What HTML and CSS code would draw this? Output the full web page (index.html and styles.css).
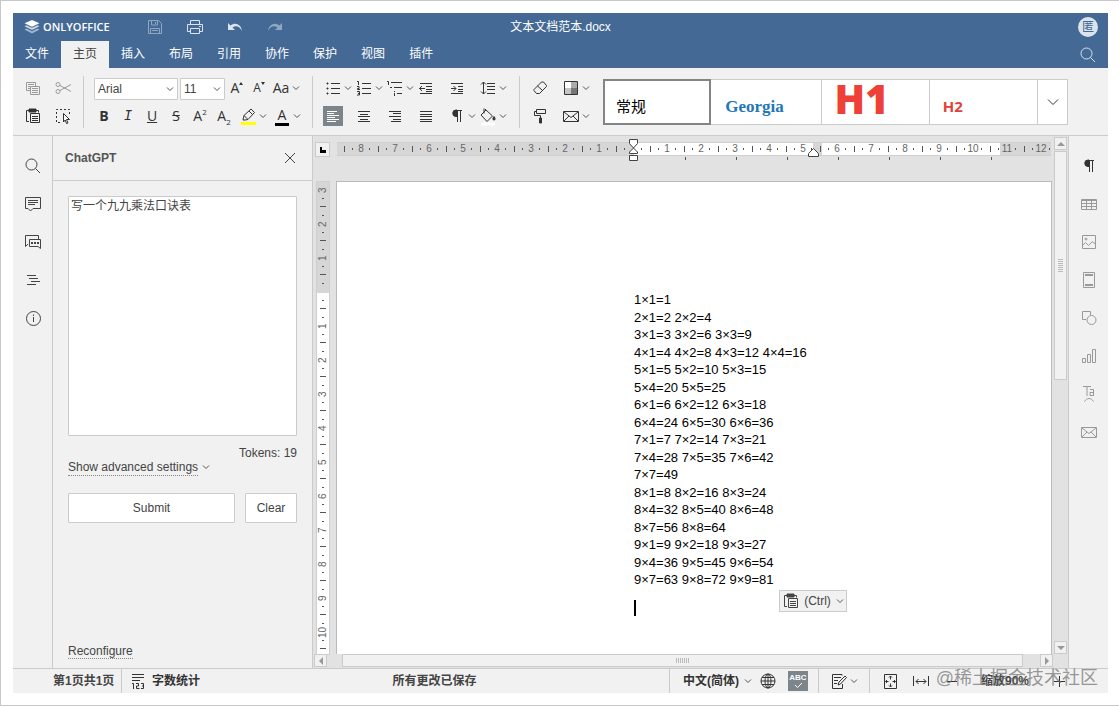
FILE: index.html
```
<!DOCTYPE html>
<html lang="zh-CN">
<head>
  <meta charset="UTF-8">
  <meta name="viewport" content="width=device-width, initial-scale=1.0">
  <title>文本文档范本.docx</title>
  <link rel="stylesheet" href="styles.css">
</head>
<body>
  <!-- Shared symbols -->
  <svg class="symbols" aria-hidden="true">
    <symbol id="caret" viewBox="0 0 10 20"><path d="M2 8.500 5 11.500l3-3"/></symbol>
    <symbol id="paste" viewBox="0 0 20 20"><path d="M6 15.500H3.500v-11H6M13 4.500h2.500v2"/><path class="solid" d="M6 3h7v3H6z"/><path d="M7.500 7.500h9v9h-9zM9 10.500h6M9 12.500h6M9 14.500h6"/></symbol>
    <symbol id="mail" viewBox="0 0 20 20"><path d="M2.500 5.500h15v10h-15zM3 6l7 5.500L17 6M3 15l5-5M17 15l-5-5"/></symbol>
    <symbol id="pilcrow" viewBox="0 0 20 20"><path class="solid" d="M10 4v6.500H9A3.200 3.200 0 0 1 9 4z"/><path d="M9 4.500h6M10.500 4v12M13.500 4v12"/></symbol>
    <symbol id="search" viewBox="0 0 20 20"><circle cx="8.500" cy="8.500" r="5.500"/><path d="m12.500 12.500 4.500 4.500"/></symbol>
  </svg>

  <div class="app">
    <header class="header">
      <div class="header-top">
        <div class="logo">
          <svg width="16" height="16" viewBox="0 0 16 16"><path fill="#fff" d="M8 1l7.500 3.300L8 7.700.5 4.300z"/><path fill="#c9d5e3" d="M2.500 6.200.5 7.300 8 10.900l7.500-3.600-2-1.100L8 8.800z"/><path fill="#a3b6cc" d="M2.500 9.500.5 10.600 8 14.500l7.500-3.900-2-1.100L8 12.200z"/></svg>
          <span>ONLYOFFICE</span>
        </div>
        <button class="head-btn dim" aria-label="保存"><svg class="icon" viewBox="0 0 20 20"><path d="M3.500 3.500h10l3 3v10h-13zM6.500 4v4h6V4M5.500 16.500v-5h9v5M7 13.500h6M10.500 5v2"/></svg></button>
        <button class="head-btn" aria-label="打印"><svg class="icon" viewBox="0 0 20 20"><path d="M5.500 7V3.500h9V7M5 14.500H2.500v-7h15v7H15M5.500 11.500h9v5h-9zM14 9.500h2"/></svg></button>
        <button class="head-btn" aria-label="撤销"><svg class="icon" viewBox="0 0 20 20"><path class="solid" stroke="none" d="M3 6v7h7L7.500 10.500C11 8 15 9.500 17 14c-.5-6-6.500-9.500-11.500-5.500z"/></svg></button>
        <button class="head-btn dim" aria-label="重做"><svg class="icon" viewBox="0 0 20 20"><path class="solid" stroke="none" d="M17 6v7h-7l2.500-2.500C9 8 5 9.500 3 14c.5-6 6.500-9.500 11.500-5.500z"/></svg></button>
        <h1 class="doc-title">文本文档范本.docx</h1>
        <span class="avatar">匿</span>
      </div>
      <nav class="tabs">
        <button class="tab">文件</button>
        <button class="tab active">主页</button>
        <button class="tab">插入</button>
        <button class="tab">布局</button>
        <button class="tab">引用</button>
        <button class="tab">协作</button>
        <button class="tab">保护</button>
        <button class="tab">视图</button>
        <button class="tab">插件</button>
        <button class="head-search" aria-label="搜索"><svg class="icon"><use href="#search"/></svg></button>
      </nav>
    </header>

    <!-- Home toolbar -->
    <div class="toolbar">
      <div class="group clip">
        <button class="btn off" aria-label="复制"><svg class="icon" viewBox="0 0 20 20"><path d="M7 12.500H3.500v-8h9V8M5 6.500h6M5 8.500h2M5 10.500h2M7.500 8.500h9v8h-9zM9 10.500h6M9 12.500h6M9 14.500h6"/></svg></button>
        <button class="btn off" aria-label="剪切"><svg class="icon" viewBox="0 0 20 20"><circle cx="5" cy="6.500" r="2"/><circle cx="5" cy="13.500" r="2"/><path d="m7 7.500 11 6M7 12.500l11-6"/></svg></button>
        <button class="btn" aria-label="粘贴"><svg class="icon"><use href="#paste"/></svg></button>
        <button class="btn" aria-label="全选"><svg class="icon" viewBox="0 0 20 20"><path stroke-dasharray="2 2" d="M16.500 8V3.500h-13v13H9"/><path fill="#fff" d="m10.500 7.500 6 6h-3l1.500 3.500-1.500.5-1.300-3.500-1.700 2z"/></svg></button>
      </div>
      <i class="sep"></i>

      <div class="group">
        <div class="row">
          <label class="combo font-name"><select aria-label="字体"><option>Arial</option></select><svg class="caret"><use href="#caret"/></svg></label>
          <label class="combo font-size"><select aria-label="字号"><option>11</option></select><svg class="caret"><use href="#caret"/></svg></label>
          <button class="btn glyph" aria-label="增大字号">A<svg class="mark" viewBox="0 0 4 4"><path d="M0 3h4L2 0z"/></svg></button>
          <button class="btn glyph small" aria-label="减小字号">A<svg class="mark" viewBox="0 0 4 4"><path d="M0 0h4L2 3z"/></svg></button>
          <button class="btn glyph wide" aria-label="更改大小写"><span>Aa</span><svg class="caret"><use href="#caret"/></svg></button>
        </div>
        <div class="row format">
          <button class="btn glyph"><b>B</b></button>
          <button class="btn glyph mono"><em>I</em></button>
          <button class="btn glyph"><u>U</u></button>
          <button class="btn glyph"><s>S</s></button>
          <button class="btn glyph"><span>A<sup>2</sup></span></button>
          <button class="btn glyph"><span>A<sub>2</sub></span></button>
          <button class="btn wide" aria-label="突出显示颜色"><svg class="icon" viewBox="0 0 20 20"><path stroke="#ff0" stroke-width="3" d="M3 17.500h15"/><path d="m5 14 1-4.500 7-6.500 3.500 3.500-6.500 7-3 .5zM6 9.500l3.500 3.500M11 5l3.500 3.500"/></svg><svg class="caret"><use href="#caret"/></svg></button>
          <button class="btn glyph wide" aria-label="字体颜色"><span class="font-color">A</span><svg class="caret"><use href="#caret"/></svg></button>
        </div>
      </div>
      <i class="sep"></i>

      <div class="group paragraph">
        <button class="btn wide" aria-label="项目符号"><svg class="icon" viewBox="0 0 20 20"><path d="M8 5.500h9M8 10.500h9M8 15.500h9"/><path class="solid" d="M4 5h1v1H4zM4 10h1v1H4zM4 15h1v1H4z"/></svg><svg class="caret"><use href="#caret"/></svg></button>
        <button class="btn wide" aria-label="编号"><svg class="icon" viewBox="0 0 20 20"><path d="M8 5.500h9M8 10.500h9M8 15.500h9M3 3.500h1.500V7M3 8.500h2v2H3.500v1H6M3 13.500h2.500v3.500H3M4 15.500h1"/></svg><svg class="caret"><use href="#caret"/></svg></button>
        <button class="btn wide" aria-label="多级列表"><svg class="icon" viewBox="0 0 20 20"><path d="M6 4.500h11M9 9.500h8M12 15.500h5M2 3.500h1.500V7M5 9.500h2M9.500 13v1M9.500 15v3"/></svg><svg class="caret"><use href="#caret"/></svg></button>
        <button class="btn" aria-label="减少缩进"><svg class="icon" viewBox="0 0 20 20"><path d="M4 5.500h12M10 8.500h6M10 11.500h6M4 15.500h12M10 13.500h6M3.500 10.500H9M6 8l-2.500 2.500L6 13"/></svg></button>
        <button class="btn" aria-label="增加缩进"><svg class="icon" viewBox="0 0 20 20"><path d="M4 5.500h12M11 8.500h5M11 11.500h5M4 15.500h12M11 13.500h5M4 10.500h5M6.500 8 9 10.500 6.500 13"/></svg></button>
        <button class="btn wide" aria-label="行距"><svg class="icon" viewBox="0 0 20 20"><path d="M9 5.500h8M9 8.500h8M9 11.500h8M9 15.500h8M5.500 4v12M3 6.500 5.500 4 8 6.500M3 13.500 5.500 16 8 13.500"/></svg><svg class="caret"><use href="#caret"/></svg></button>
        <button class="btn pressed" aria-label="左对齐"><svg class="icon" viewBox="0 0 20 20"><path d="M4 5.500h10M4 7.500h7M4 9.500h12M4 11.500h8M4 13.500h12M4 15.500h9"/></svg></button>
        <button class="btn" aria-label="居中"><svg class="icon" viewBox="0 0 20 20"><path d="M4 5.500h12M6 8.500h8M4 10.500h12M6 13.500h8M4 15.500h12"/></svg></button>
        <button class="btn" aria-label="右对齐"><svg class="icon" viewBox="0 0 20 20"><path d="M4 5.500h12M8 7.500h8M4 10.500h12M8 13.500h8M6 15.500h10"/></svg></button>
        <button class="btn" aria-label="两端对齐"><svg class="icon" viewBox="0 0 20 20"><path d="M4 5.500h12M4 8.500h12M4 10.500h12M4 13.500h12M4 15.500h12"/></svg></button>
        <button class="btn wide" aria-label="非打印字符"><svg class="icon"><use href="#pilcrow"/></svg><svg class="caret"><use href="#caret"/></svg></button>
        <button class="btn wide" aria-label="底纹"><svg class="icon" viewBox="0 0 20 20"><path d="m3 9 5-5 6.500 6L9 15.500zM6 2.500v5M7 3l2 2"/><path class="solid" d="M16 10.500c1.500 2 1.500 3.500 0 3.500s-1.500-1.500 0-3.500z"/><path stroke="#fff" stroke-width="3" d="M3 18h14"/></svg><svg class="caret"><use href="#caret"/></svg></button>
      </div>
      <i class="sep"></i>

      <div class="group extra">
        <button class="btn" aria-label="清除样式"><svg class="icon" viewBox="0 0 20 20"><path d="m4 11.500 7.500-7.500h2l3 3.500v1L9.500 15.500H6.500l-2.500-3zM7.500 8l5 4.500"/></svg></button>
        <button class="btn wide" aria-label="更改颜色方案"><svg class="icon" viewBox="0 0 20 20"><path fill="#fff" stroke="none" d="M4 4h6v6H4z"/><path fill="#c4c4c4" stroke="none" d="M4 10h6v6H4z"/><path fill="#aaa" stroke="none" d="M10 4h6v6h-6z"/><path fill="#777" stroke="none" d="M10 10h6v6h-6z"/><path d="M3.500 3.500h13v13h-13z"/></svg><svg class="caret"><use href="#caret"/></svg></button>
        <button class="btn" aria-label="复制样式"><svg class="icon" viewBox="0 0 20 20"><path d="M6.500 3.500h9v4h-9zM6 5.500H4.500v4h6V12"/><path class="solid" d="M9.500 12h2v5h-2z"/></svg></button>
        <button class="btn wide" aria-label="邮件合并"><svg class="icon"><use href="#mail"/></svg><svg class="caret"><use href="#caret"/></svg></button>
      </div>

      <div class="gallery">
        <button class="style current">常规</button>
        <button class="style georgia">Georgia</button>
        <button class="style big">H1</button>
        <button class="style h2">H2</button>
        <button class="style more" aria-label="更多样式"><svg class="icon" viewBox="0 0 20 20"><path d="m5 7.500 5 5 5-5"/></svg></button>
      </div>
    </div>

    <main class="main">
      <aside class="side left">
        <button aria-label="查找"><svg class="icon"><use href="#search"/></svg></button>
        <button aria-label="批注"><svg class="icon" viewBox="0 0 20 20"><path d="M2.500 3.500h15v11H10L7.500 17 5 14.500H2.500zM5 6.500h10M5 8.500h10M5 10.500h7"/></svg></button>
        <button aria-label="聊天"><svg class="icon" viewBox="0 0 20 20"><path d="M5 12 2.500 14.500v-11h13V7"/><path d="M6.500 7.500h11v9L15 14.500H6.500z"/><path class="solid" stroke="none" d="M8 10h2v2H8zM11 10h2v2h-2zM14 10h2v2h-2z"/></svg></button>
        <button aria-label="标题"><svg class="icon" viewBox="0 0 20 20"><path d="M4 5.500h9M6 8.500h9M8 11.500h9M4 14.500h9"/></svg></button>
        <button aria-label="关于"><svg class="icon" viewBox="0 0 20 20"><circle cx="10.500" cy="10.500" r="7"/><path d="M10.500 9v5M10.500 6.500v1.500"/></svg></button>
      </aside>

      <section class="plugin">
        <div class="plugin-head">
          <h2>ChatGPT</h2>
          <button class="close" aria-label="关闭"><svg class="icon" viewBox="0 0 20 20"><path d="m5 5 10 10M15 5 5 15"/></svg></button>
        </div>
        <form class="plugin-body">
          <textarea aria-label="Prompt">写一个九九乘法口诀表</textarea>
          <p class="tokens">Tokens: 19</p>
          <p class="advanced"><a href="#">Show advanced settings</a><svg class="caret"><use href="#caret"/></svg></p>
          <div class="actions">
            <button type="button" class="submit">Submit</button>
            <button type="reset" class="clear">Clear</button>
          </div>
          <p class="reconfigure"><a href="#">Reconfigure</a></p>
        </form>
      </section>

      <section class="editor">
        <div class="corner"><span></span></div>
        <div class="hruler">
          <div class="scale">
            <span>8</span><span>7</span><span>6</span><span>5</span><span>4</span><span>3</span><span>2</span><span>1</span><span></span><span>1</span><span>2</span><span>3</span><span>4</span><span>5</span><span>6</span><span>7</span><span>8</span><span>9</span><span>10</span><span>11</span><span>12</span>
          </div>
          <svg class="indent-left" viewBox="0 0 11 22"><path d="M1.500.5h8v4l-4 4.500-4-4.500zM5.500 9l4 4v1.500h-8V13zM1.500 16.500h8v5h-8z"/></svg>
          <svg class="indent-right" viewBox="0 0 11 9"><path d="M.5 8.500v-3l5-5 5 5v3z"/></svg>
        </div>
        <div class="vruler">
          <span>3</span><span>2</span><span>1</span><span></span><span>1</span><span>2</span><span>3</span><span>4</span><span>5</span><span>6</span><span>7</span><span>8</span><span>9</span><span>10</span>
        </div>
        <div class="page">
          <div class="lines">
            <p>1×1=1</p>
            <p>2×1=2 2×2=4</p>
            <p>3×1=3 3×2=6 3×3=9</p>
            <p>4×1=4 4×2=8 4×3=12 4×4=16</p>
            <p>5×1=5 5×2=10 5×3=15</p>
            <p>5×4=20 5×5=25</p>
            <p>6×1=6 6×2=12 6×3=18</p>
            <p>6×4=24 6×5=30 6×6=36</p>
            <p>7×1=7 7×2=14 7×3=21</p>
            <p>7×4=28 7×5=35 7×6=42</p>
            <p>7×7=49</p>
            <p>8×1=8 8×2=16 8×3=24</p>
            <p>8×4=32 8×5=40 8×6=48</p>
            <p>8×7=56 8×8=64</p>
            <p>9×1=9 9×2=18 9×3=27</p>
            <p>9×4=36 9×5=45 9×6=54</p>
            <p>9×7=63 9×8=72 9×9=81</p>
          </div>
          <div class="cursor"></div>
          <button class="paste-options"><svg class="icon"><use href="#paste"/></svg><span>(Ctrl)</span><svg class="caret"><use href="#caret"/></svg></button>
        </div>
        <div class="vscroll">
          <button class="arrow" aria-label="向上"><svg viewBox="0 0 8 8"><path d="M0 6h8L4 2z"/></svg></button>
          <div class="thumb"><i class="grip"></i></div>
          <button class="arrow end" aria-label="向下"><svg viewBox="0 0 8 8"><path d="M0 2h8L4 6z"/></svg></button>
        </div>
        <div class="hscroll">
          <button class="arrow" aria-label="向左"><svg viewBox="0 0 8 8"><path d="M6 0v8L2 4z"/></svg></button>
          <div class="thumb"><i class="grip"></i></div>
          <button class="arrow" aria-label="向右"><svg viewBox="0 0 8 8"><path d="M2 0v8l4-4z"/></svg></button>
        </div>
      </section>

      <aside class="side right">
        <button class="on" aria-label="段落设置"><svg class="icon"><use href="#pilcrow"/></svg></button>
        <button aria-label="表格设置"><svg class="icon" viewBox="0 0 20 20"><path d="M2.500 5.500h15v10h-15zM2.500 6.500h15M2.500 9.500h15M2.500 12.500h15M7.500 6v9M12.500 6v9"/></svg></button>
        <button aria-label="图像设置"><svg class="icon" viewBox="0 0 20 20"><path d="M3.500 3.500h13v13h-13zM4 13l2.500-2.500 3 3 4-4 1.500 2 1.500-1"/><circle cx="7" cy="7" r="1"/></svg></button>
        <button aria-label="页眉页脚设置"><svg class="icon" viewBox="0 0 20 20"><path d="M4.500 2.500h11v15h-11z"/><path stroke-width="2" d="M6 5h8M6 15h8"/></svg></button>
        <button aria-label="形状设置"><svg class="icon" viewBox="0 0 20 20"><path d="M7 11.500H3.500v-8h8V7"/><circle cx="12.500" cy="12" r="4.500"/></svg></button>
        <button aria-label="图表设置"><svg class="icon" viewBox="0 0 20 20"><path d="M3.500 12.500h3v4h-3zM8.500 8.500h3v8h-3zM13.500 3.500h3v13h-3z"/></svg></button>
        <button aria-label="艺术字设置"><svg class="icon" viewBox="0 0 20 20"><path d="M4 2.500h8M8 2.500V12M11 5.500h3.500V12M14.500 8.500H11v3h3.500M5.500 17.500C8 13.500 12 13.500 14.500 17.500"/></svg></button>
        <button aria-label="邮件合并设置"><svg class="icon"><use href="#mail"/></svg></button>
      </aside>
    </main>

    <footer class="status">
      <span class="pages">第1页共1页</span>
      <button class="count"><svg class="icon" viewBox="0 0 20 20"><path d="M4 3.500h12M4 6.500h12M4 9.500h8"/><path d="M4 12.500h1.500V18M8 12.500h2.500v2.500h-2v2.500h3M13 12.500h2.500v5H13M14 15h1"/></svg>字数统计</button>
      <span class="saved">所有更改已保存</span>
      <button class="lang">中文(简体)<svg class="caret"><use href="#caret"/></svg></button>
      <button class="btn" aria-label="文档语言"><svg class="icon" viewBox="0 0 20 20"><circle cx="10" cy="10" r="7"/><ellipse cx="10" cy="10" rx="3" ry="7"/><path d="M10 3v14M3 10h14M4 6.500h12M4 13.500h12"/></svg></button>
      <button class="btn spell" aria-label="拼写检查"><span>ABC</span><svg viewBox="0 0 10 7"><path d="m2 3 2.500 2.500L9 1"/></svg></button>
      <i class="sep"></i>
      <button class="btn wide" aria-label="修订"><svg class="icon" viewBox="0 0 20 20"><path d="M13 4.500V3.500H3.500v14h10V13M5 6.500h7M5 9.500h4M5 12.500h3M9 14l1-3 6-6 1.500 1.500-6 6.500z"/></svg><svg class="caret"><use href="#caret"/></svg></button>
      <i class="sep"></i>
      <button class="btn" aria-label="适合页面"><svg class="icon" viewBox="0 0 20 20"><path d="M4.500 3.500h12v14h-12zM10.500 5v3.500M9 6.500 10.500 5 12 6.500M10.500 16v-3.500M9 14.500l1.500 1.500 1.500-1.500M5.500 10.500h3M7 9l-1.500 1.500L7 12M15.500 10.500h-3M14 9l1.500 1.500L14 12"/></svg></button>
      <button class="btn fit" aria-label="适合宽度"><svg class="icon" viewBox="0 0 20 20"><path d="M2.500 5v10M17.500 5v10M5 10.500h10M7.500 8 5 10.500 7.500 13M12.500 8l2.500 2.500-2.500 2.500"/></svg></button>
      <button class="btn fit" aria-label="缩小"><svg class="icon" viewBox="0 0 20 20"><path d="M5 10.500h10"/></svg></button>
      <span class="zoom">缩放90%</span>
      <button class="btn" aria-label="放大"><svg class="icon" viewBox="0 0 20 20"><path d="M5 10.500h11M10.500 5v11"/></svg></button>
      <span class="watermark">@稀土掘金技术社区</span>
    </footer>
  </div>
</body>
</html>
```
FILE: styles.css
```
/* Global reset */
* {
  margin: 0;
  padding: 0;
  box-sizing: border-box;
}

body {
  height: 100vh;
  padding-bottom: 2px;
  background: #fff;
  color: #444;
  font: 12px/16px "Liberation Sans", "Noto Sans CJK SC", sans-serif;
}

button, select, textarea {
  font: inherit;
  color: inherit;
  border: none;
  background: none;
}

button {
  display: flex;
  align-items: center;
  justify-content: center;
  white-space: nowrap;
}

.symbols {
  position: absolute;
  width: 0;
  height: 0;
}

.icon {
  width: 20px;
  height: 20px;
  flex: none;
  fill: none;
  stroke: currentColor;
}

.icon .solid,
.solid {
  fill: currentColor;
}

.caret {
  width: 10px;
  height: 20px;
  flex: none;
  fill: none;
  stroke: #555;
}

.app {
  display: flex;
  flex-direction: column;
  height: 100%;
  padding: 12px 11px 12px 12px;
  border: 1px solid #c8c8c8;
  border-right: none;
}

/* Header */
.header {
  background: #446995;
  color: #fff;
}

.header-top {
  display: flex;
  align-items: center;
  position: relative;
  height: 28px;
  padding: 0 10px 0 11px;
}

.logo {
  display: flex;
  align-items: center;
  gap: 3px;
  width: 111px;
  font: 600 11px/16px "Open Sans", sans-serif;
}

.head-btn {
  width: 40px;
  height: 28px;
  color: #dbe3ec;
}

.head-btn.dim {
  color: #8fa7c2;
}

.doc-title {
  position: absolute;
  left: 50%;
  transform: translateX(-50%);
  font-size: 12px;
  font-weight: normal;
}

.avatar {
  width: 20px;
  height: 20px;
  margin-left: auto;
  border-radius: 50%;
  background: #dbe3ec;
  color: #446995;
  line-height: 20px;
  text-align: center;
}

.tabs {
  display: flex;
  height: 27px;
}

.tab {
  padding: 0 12px 2px;
}

.tab.active {
  background: #f1f1f1;
  color: #444;
}

.head-search {
  margin: 0 10px 0 auto;
  color: #dbe3ec;
}

/* Toolbar */
.toolbar {
  display: flex;
  height: 68px;
  padding: 10px 40px 0 10px;
  background: #f1f1f1;
  border-bottom: 1px solid #cbcbcb;
  color: #333;
}

.group {
  display: grid;
  grid-auto-rows: 20px;
  align-content: start;
  gap: 8px 0;
}

.clip {
  grid-template-columns: 20px 20px;
  column-gap: 10px;
}

.paragraph {
  grid-template-columns: repeat(6, 31px);
}

.extra {
  grid-template-columns: repeat(2, 31px);
}

.sep {
  width: 1px;
  height: 52px;
  margin: -2px 10px 0;
  background: #cbcbcb;
}

.row {
  display: flex;
  gap: 2px;
}

.row.format {
  gap: 4px;
}

.btn {
  width: 20px;
  height: 20px;
}

.btn.wide {
  width: 30px;
}

.btn.off {
  color: #999;
}

.btn.pressed {
  background: #7d858c;
  color: #fff;
}

.glyph {
  position: relative;
  font: 14px/20px "Open Sans", sans-serif;
}

.glyph.small {
  font-size: 12px;
}

.glyph.mono {
  font-family: "Liberation Mono", monospace;
}

.glyph.wide > span {
  width: 20px;
  text-align: center;
}

.glyph sup,
.glyph sub {
  font-size: 8px;
  line-height: 0;
}

.mark {
  width: 4px;
  height: 4px;
  align-self: flex-start;
  margin-top: 4px;
  fill: #333;
}

.glyph .font-color {
  height: 20px;
  border-bottom: 3px solid #000;
  line-height: 18px;
}

.glyph.wide .font-color {
  width: 14px;
  margin: 0 3px;
}

.combo {
  position: relative;
  width: 84px;
  height: 22px;
  background: #fff;
  border: 1px solid #cbcbcb;
  border-radius: 1px;
}

.combo.font-size {
  width: 45px;
}

.combo select {
  width: 100%;
  height: 20px;
  padding-left: 3px;
  appearance: none;
  color: #444;
}

.combo .caret {
  position: absolute;
  right: 2px;
  top: 0;
  pointer-events: none;
}

/* Style gallery */
.gallery {
  display: grid;
  grid-template-columns: repeat(4, 1fr) 30px;
  flex: 1;
  height: 46px;
  margin: 1px 0 0 11px;
  background: #fff;
  border: 1px solid #cbcbcb;
}

.style {
  justify-content: flex-start;
  align-items: flex-end;
  padding: 0 0 6px 13px;
  border-left: 1px solid #cbcbcb;
  line-height: 24px;
}

.style.current {
  margin: -1px 1px -1px -1px;
  border: 2px solid #848484;
  padding: 0 0 4px 11px;
  color: #000;
  font-size: 15px;
}

.style.georgia {
  border-left: none;
  padding-bottom: 5px;
  color: #2376b8;
  font: bold 17px/24px "Liberation Serif", serif;
}

.style.big {
  color: #ee4036;
  font: 800 40px/38px "Open Sans", sans-serif;
}

.style.h2 {
  color: #dd4339;
  font: bold 15px/24px "Open Sans", sans-serif;
}

.style.more {
  justify-content: center;
  align-items: center;
  padding: 0;
}

/* Main area */
.main {
  display: flex;
  flex: 1;
  min-height: 0;
  background: #f1f1f1;
}

.side {
  width: 40px;
  flex: none;
  padding-top: 11px;
}

.side button {
  width: 39px;
  height: 38px;
}

.side.left {
  border-right: 1px solid #cbcbcb;
}

.side.right {
  border-left: 1px solid #cbcbcb;
  color: #999;
}

.side .on {
  color: #333;
}

/* ChatGPT plugin */
.plugin {
  display: flex;
  flex-direction: column;
  width: 260px;
  flex: none;
  border-right: 1px solid #cbcbcb;
}

.plugin-head {
  display: flex;
  align-items: center;
  justify-content: space-between;
  height: 45px;
  padding: 0 12px;
  border-bottom: 1px solid #cbcbcb;
}

.plugin-head h2 {
  color: #555;
  font-size: 12px;
}

.plugin-body {
  display: flex;
  flex-direction: column;
  flex: 1;
  padding: 15px;
}

.plugin textarea {
  height: 240px;
  padding: 1px 2px;
  background: #fff;
  border: 1px solid #cbcbcb;
  border-radius: 1px;
  resize: none;
}

.tokens {
  margin-top: 9px;
  text-align: right;
}

.plugin a {
  color: #444;
  border-bottom: 1px dotted #888;
  text-decoration: none;
}

.advanced {
  display: flex;
  align-items: center;
  height: 12px;
  gap: 3px;
}

.actions {
  display: flex;
  gap: 10px;
  margin-top: 20px;
}

.actions button {
  height: 30px;
  background: #fff;
  border: 1px solid #cbcbcb;
  border-radius: 1px;
}

.submit {
  flex: 1;
}

.clear {
  width: 52px;
}

.reconfigure {
  margin-top: auto;
  margin-bottom: -6px;
}

/* Document editor */
.editor {
  display: grid;
  grid-template-columns: 23px 1fr 16px;
  grid-template-rows: 45px 1fr 14px;
  flex: 1;
  min-width: 0;
  background: #e2e2e2;
}

.corner {
  width: 15px;
  height: 15px;
  margin: 6px 0 0 2px;
  padding: 4px;
  background: #f1f1f1;
  border: 1px solid #cbcbcb;
}

.corner span {
  display: block;
  width: 6px;
  height: 6px;
  border-left: 2px solid #000;
  border-bottom: 3px solid #000;
}

.hruler {
  position: relative;
  padding: 6px 1px 0;
  overflow: hidden;
  background: repeating-linear-gradient(90deg, #555 0 1px, transparent 1px 51px) 349px 21px / 308px 3px no-repeat;
}

.scale {
  display: flex;
  height: 14px;
  padding-left: 7px;
  overflow: hidden;
  background: linear-gradient(90deg, #d6d6d6 297px, #fff 297px 476px, #d6d6d6 476px 485px, #fff 485px 663px, #d6d6d6 663px);
  border: 1px solid #cfcfcf;
  border-width: 1px 0;
}

/* one centimetre: long tick at the half, short ticks at the quarters */
.scale span,
.vruler span {
  flex: none;
  width: 34px;
  color: #666;
  font-size: 10px;
  line-height: 12px;
  text-align: center;
}

.scale span {
  background:
    linear-gradient(#555, #555) 0 50% / 1px 6px no-repeat,
    linear-gradient(#555, #555) 8px 50% / 1px 2px no-repeat,
    linear-gradient(#555, #555) 25px 50% / 1px 2px no-repeat;
}

.indent-left,
.indent-right {
  position: absolute;
  width: 11px;
  fill: #fff;
  stroke: #444;
}

.indent-left {
  left: 292px;
  top: 3px;
  height: 22px;
}

.indent-right {
  left: 472px;
  top: 12px;
  height: 9px;
}

.vruler {
  width: 12px;
  margin: 1px 0 0 4px;
  overflow: hidden;
  background: linear-gradient(#d6d6d6 111px, #fff 111px);
  outline: 1px solid #cfcfcf;
}

.vruler span {
  display: block;
  width: 12px;
  height: 34px;
  writing-mode: vertical-rl;
  transform: rotate(180deg);
  background:
    linear-gradient(#555, #555) 50% 0 / 6px 1px no-repeat,
    linear-gradient(#555, #555) 50% 8px / 2px 1px no-repeat,
    linear-gradient(#555, #555) 50% 25px / 2px 1px no-repeat;
}

.vruler span:first-child {
  margin-top: -9px;
}

.page {
  position: relative;
  min-height: 0;
  padding: 109px 0 0 297px;
  overflow: hidden;
  background: #fff;
  border: 1px solid #bbb;
  border-bottom: none;
}

.lines {
  display: flex;
  flex-direction: column;
  justify-content: space-between;
  height: 297px;
  color: #000;
  font-size: 13px;
  line-height: 17px;
}

.cursor {
  width: 2px;
  height: 16px;
  margin-top: 12px;
  background: #000;
}

.paste-options {
  position: absolute;
  left: 442px;
  top: 408px;
  width: 68px;
  height: 22px;
  background: #f1f1f1;
  border: 1px solid #cbcbcb;
}

.paste-options span {
  margin: 0 4px 0 3px;
}

/* Scrollbars */
.vscroll {
  grid-column: 3;
  grid-row: 1 / 3;
  display: flex;
  flex-direction: column;
  margin: 1px 1px 0 2px;
}

.vscroll .thumb {
  height: 229px;
  margin-top: 1px;
}

.vscroll .end {
  margin-top: auto;
}

.hscroll {
  grid-column: 1 / 4;
  display: flex;
  padding: 0 15px 1px 1px;
}

.hscroll .thumb {
  flex: 1;
  margin: 0 17px 0 15px;
}

.arrow {
  width: 13px;
  height: 13px;
  flex: none;
  background: #f1f1f1;
  border: 1px solid #cbcbcb;
}

.arrow svg {
  width: 8px;
  height: 8px;
  fill: #999;
}

.thumb {
  display: flex;
  align-items: center;
  justify-content: center;
  background: #f1f1f1;
  border: 1px solid #cbcbcb;
}

.grip {
  width: 5px;
  height: 13px;
  background: repeating-linear-gradient(#bbb 0 1px, transparent 1px 2px);
}

.hscroll .grip {
  width: 13px;
  height: 5px;
  background: repeating-linear-gradient(90deg, #bbb 0 1px, transparent 1px 2px);
}

/* Status bar */
.status {
  display: flex;
  align-items: center;
  position: relative;
  height: 25px;
  flex: none;
  background: #f1f1f1;
  border-top: 1px solid #cbcbcb;
  font-weight: bold;
}

.status button {
  color: #333;
}

.pages {
  width: 109px;
  padding-left: 40px;
  border-right: 1px solid #cbcbcb;
  line-height: 24px;
  white-space: nowrap;
}

.count {
  gap: 4px;
  padding-left: 6px;
}

.saved {
  flex: 1;
  text-align: center;
}

.lang {
  height: 24px;
  gap: 4px;
  margin-right: 5px;
  padding-left: 13px;
  border-left: 1px solid #cbcbcb;
}

.status .sep {
  height: 24px;
  margin-top: 0;
}

.status .btn.spell {
  flex-direction: column;
  margin-left: 10px;
  background: #7d858c;
  color: #fff;
  font-size: 8px;
  line-height: 8px;
}

.spell svg {
  width: 10px;
  height: 7px;
  fill: none;
  stroke: #fff;
}

.fit {
  margin-left: 11px;
}

.zoom {
  margin: 0 20px 0 19px;
}

.zoom + .btn {
  margin-right: 39px;
}

.watermark {
  position: absolute;
  right: 10px;
  top: -3px;
  color: rgba(110, 110, 110, 0.7);
  font-size: 18px;
  font-weight: normal;
  line-height: 24px;
  pointer-events: none;
}
```
